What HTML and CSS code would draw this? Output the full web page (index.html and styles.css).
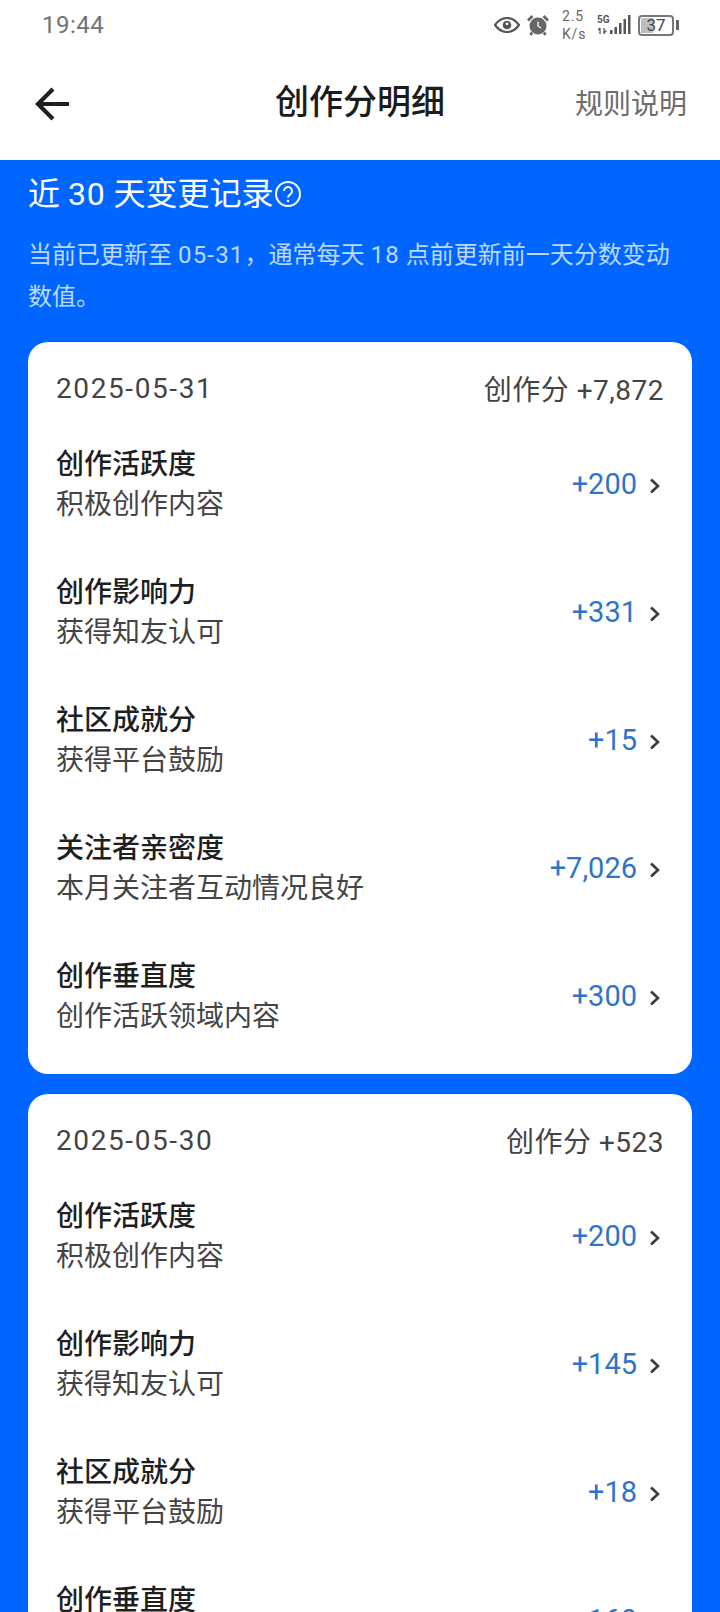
FILE: index.html
```html
<!DOCTYPE html>
<html lang="zh">
<head>
<meta charset="utf-8">
<title>创作分明细</title>
<link rel="stylesheet" href="styles.css">
</head>
<body>
<div class="app">
  <header class="head">
    <div class="status">
      <span class="clock">19:44</span>
      <div class="status-icons">
        <svg class="ic-eye" width="26" height="16" viewBox="0 0 26 16"><path d="M1 8C5 2.500 9 1 13 1s8 1.500 12 7c-4 5.500-8 7-12 7S5 13.500 1 8z" fill="none" stroke="#555" stroke-width="2.200"/><circle cx="13" cy="8" r="4.300" fill="#555"/><circle cx="13" cy="6.800" r="1.400" fill="#fff"/></svg>
        <svg class="ic-alarm" width="22" height="22" viewBox="0 0 22 22"><circle cx="11" cy="12" r="8.500" fill="#666"/><path d="M11 7.500V12l3 2" fill="none" stroke="#fff" stroke-width="1.300"/><path d="M1 6.500 5.500 2M21 6.500 16.500 2M5 18.500 3.500 21M17 18.500 18.500 21" stroke="#666" stroke-width="2.800" fill="none"/></svg>
        <span class="speed">2.5<br>K/s</span>
        <svg class="ic-signal" width="34" height="22" viewBox="0 0 34 22"><text x="0" y="9" class="signal-label">5G</text><rect x="13" y="16" width="2.500" height="4" fill="#555"/><rect x="17.500" y="13" width="2.500" height="7" fill="#555"/><rect x="22" y="9" width="2.500" height="11" fill="#555"/><rect x="26.500" y="5" width="2.500" height="15" fill="#555"/><rect x="31" y="1" width="2.500" height="19" fill="#555"/><path d="M3 14v6M1.200 16 3 14M7 14v6M7 19l2.500-2.500" stroke="#555" stroke-width="1.300" fill="none"/></svg>
        <div class="battery"><span class="battery-fill"></span><span class="battery-num">37</span></div>
        <span class="battery-cap"></span>
      </div>
    </div>
    <nav class="nav">
      <svg class="back" width="34" height="34" viewBox="0 0 34 34"><path d="M18 2 3 17l15 15M3 17h31" fill="none" stroke="#1f1f1f" stroke-width="4.200"/></svg>
      <h1 class="page-title">创作分明细</h1>
      <span class="rules">规则说明</span>
    </nav>
  </header>
  <main class="main">
    <h2 class="sec-title">近 <span class="title-num">30</span> 天变更记录<svg class="help" width="28" height="28" viewBox="0 0 28 28"><circle cx="14" cy="14" r="12" fill="none" stroke="#fff" stroke-width="2"/><path d="M10 11a4 4 0 1 1 6.300 3.300c-1.600 1-2.300 1.800-2.300 3.200" fill="none" stroke="#fff" stroke-width="2"/><circle cx="14" cy="21" r="1.300" fill="#fff"/></svg></h2>
    <p class="sec-desc">当前已更新至 <span class="num">05-31</span>，通常每天 <span class="num">18</span> 点前更新前一天分数变动数值。</p>

    <section class="card">
      <div class="card-head"><span class="date">2025-05-31</span><span class="total">创作分 +7,872</span></div>
      <div class="row"><div class="row-text"><div class="row-title">创作活跃度</div><div class="row-sub">积极创作内容</div></div><span class="val">+200</span><svg class="chev" width="12" height="18" viewBox="0 0 12 18"><path d="M2 2.500l7 6.500-7 6.500" fill="none" stroke="#3a3a3a" stroke-width="2.600"/></svg></div>
      <div class="row"><div class="row-text"><div class="row-title">创作影响力</div><div class="row-sub">获得知友认可</div></div><span class="val">+331</span><svg class="chev" width="12" height="18" viewBox="0 0 12 18"><path d="M2 2.500l7 6.500-7 6.500" fill="none" stroke="#3a3a3a" stroke-width="2.600"/></svg></div>
      <div class="row"><div class="row-text"><div class="row-title">社区成就分</div><div class="row-sub">获得平台鼓励</div></div><span class="val">+15</span><svg class="chev" width="12" height="18" viewBox="0 0 12 18"><path d="M2 2.500l7 6.500-7 6.500" fill="none" stroke="#3a3a3a" stroke-width="2.600"/></svg></div>
      <div class="row"><div class="row-text"><div class="row-title">关注者亲密度</div><div class="row-sub">本月关注者互动情况良好</div></div><span class="val">+7,026</span><svg class="chev" width="12" height="18" viewBox="0 0 12 18"><path d="M2 2.500l7 6.500-7 6.500" fill="none" stroke="#3a3a3a" stroke-width="2.600"/></svg></div>
      <div class="row"><div class="row-text"><div class="row-title">创作垂直度</div><div class="row-sub">创作活跃领域内容</div></div><span class="val">+300</span><svg class="chev" width="12" height="18" viewBox="0 0 12 18"><path d="M2 2.500l7 6.500-7 6.500" fill="none" stroke="#3a3a3a" stroke-width="2.600"/></svg></div>
    </section>

    <section class="card">
      <div class="card-head"><span class="date">2025-05-30</span><span class="total">创作分 +523</span></div>
      <div class="row"><div class="row-text"><div class="row-title">创作活跃度</div><div class="row-sub">积极创作内容</div></div><span class="val">+200</span><svg class="chev" width="12" height="18" viewBox="0 0 12 18"><path d="M2 2.500l7 6.500-7 6.500" fill="none" stroke="#3a3a3a" stroke-width="2.600"/></svg></div>
      <div class="row"><div class="row-text"><div class="row-title">创作影响力</div><div class="row-sub">获得知友认可</div></div><span class="val">+145</span><svg class="chev" width="12" height="18" viewBox="0 0 12 18"><path d="M2 2.500l7 6.500-7 6.500" fill="none" stroke="#3a3a3a" stroke-width="2.600"/></svg></div>
      <div class="row"><div class="row-text"><div class="row-title">社区成就分</div><div class="row-sub">获得平台鼓励</div></div><span class="val">+18</span><svg class="chev" width="12" height="18" viewBox="0 0 12 18"><path d="M2 2.500l7 6.500-7 6.500" fill="none" stroke="#3a3a3a" stroke-width="2.600"/></svg></div>
      <div class="row"><div class="row-text"><div class="row-title">创作垂直度</div><div class="row-sub">创作活跃领域内容</div></div><span class="val">+160</span><svg class="chev" width="12" height="18" viewBox="0 0 12 18"><path d="M2 2.500l7 6.500-7 6.500" fill="none" stroke="#3a3a3a" stroke-width="2.600"/></svg></div>
    </section>
  </main>
</div>
</body>
</html>
```
FILE: styles.css
```css
* { box-sizing: border-box; }
html, body { margin: 0; padding: 0; background: #0066ff; }
body { font-family: Roboto, "Noto Sans CJK SC", sans-serif; color: #1f1f1f; }
.app { width: 720px; height: 1612px; overflow: hidden; display: flex; flex-direction: column; }

.head { height: 160px; background: #fff; display: flex; flex-direction: column; flex: none; }
.status { height: 50px; display: flex; align-items: center; justify-content: space-between; padding: 0 41px 0 42px; flex: none; }
.clock { font-size: 24px; color: #727272; letter-spacing: .5px; }
.status-icons { display: flex; align-items: center; }
.ic-eye { margin-right: 7px; }
.ic-alarm { margin-right: 13px; }
.speed { font-size: 14px; line-height: 18px; color: #666; width: 35px; letter-spacing: .8px; }
.ic-signal { margin-right: 7px; }
.signal-label { font-family: Roboto, sans-serif; font-size: 10px; font-weight: 700; fill: #555; }
.battery { width: 36px; height: 21px; border: 2px solid #777; border-radius: 4px; position: relative; display: flex; align-items: center; justify-content: center; overflow: hidden; }
.battery-fill { position: absolute; left: 1px; top: 1px; bottom: 1px; width: 12px; background: #bdbdbd; }
.battery-num { position: relative; font-size: 17px; color: #444; }
.battery-cap { width: 3px; height: 10px; background: #666; margin-left: 2px; }

.nav { flex: 1; display: flex; align-items: center; justify-content: space-between; padding: 0 33px 0 35px; position: relative; }
.back { flex: none; margin-bottom: 2px; }
.page-title { position: absolute; left: 0; right: 0; top: 29px; margin: 0; text-align: center; font-size: 34px; line-height: 46px; font-weight: 500; color: #1c1c1c; }
.rules { font-size: 28px; color: #6d6d6d; margin-bottom: 6px; }

.main { flex: 1; padding: 0 28px; }
.sec-title { margin: 12px 0 0; display: flex; align-items: center; font-size: 32px; line-height: 44px; font-weight: 400; color: #fff; white-space: pre; }
.title-num { letter-spacing: .8px; }
.help { margin-left: 1px; }
.sec-desc { margin: 18px 0 24px; font-size: 24px; line-height: 42px; color: #bcd8ff; }
.num { letter-spacing: 1.2px; }

.card { background: #fff; border-radius: 20px; padding: 19px 28px 0; margin-bottom: 20px; height: 732px; }
.card-head { display: flex; justify-content: space-between; align-items: center; height: 54px; margin-bottom: 6px; font-size: 28px; color: #444; }
.date { letter-spacing: 1.6px; }
.total { letter-spacing: .5px; }
.row { height: 128px; display: flex; align-items: center; }
.row-text { flex: 1; }
.row-title { font-size: 28px; line-height: 40px; font-weight: 500; color: #1f1f1f; }
.row-sub { font-size: 28px; line-height: 40px; color: #444; }
.val { font-size: 29px; color: #2f74c9; margin-right: 12px; padding-bottom: 2px; }
.chev { flex: none; margin-right: 3px; margin-top: 1px; }
```
